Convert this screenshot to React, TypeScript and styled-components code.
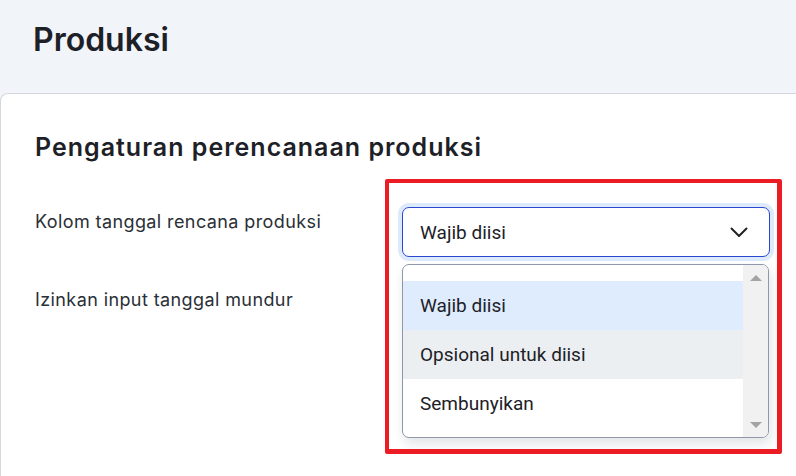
import styled, { createGlobalStyle } from 'styled-components';

const GlobalStyle = createGlobalStyle`
  html, body {
    margin: 0;
    padding: 0;
    background: #f1f4f9;
    overflow: hidden;
  }
  body {
    font-family: Inter, 'Noto Sans', sans-serif;
    color: #1d2127;
  }
`;

const Page = styled.div`
  width: 796px;
  height: 476px;
  display: flex;
  flex-direction: column;
`;

const Header = styled.header`
  height: 93px;
  padding: 20px 33px 0;
  box-sizing: border-box;
`;

const PageTitle = styled.h1`
  margin: 0;
  font-size: 32px;
  line-height: 40px;
  font-weight: 600;
  color: #1d2127;
`;

const Card = styled.section`
  flex: 1;
  width: 830px;
  background: #ffffff;
  border: 1px solid #d3d8e0;
  border-right: none;
  border-bottom: none;
  border-top-left-radius: 8px;
  padding: 35px 34px 0;
  box-sizing: border-box;
`;

const SectionTitle = styled.h2`
  margin: 0 0 42px;
  font-size: 25px;
  line-height: 36px;
  font-weight: 600;
  letter-spacing: 1px;
  color: #1d2127;
`;

const SettingsGrid = styled.div`
  display: grid;
  grid-template-columns: 367px 368px;
  row-gap: 28px;
`;

const Label = styled.div`
  font-size: 18px;
  line-height: 22px;
  letter-spacing: 0.4px;
  color: #2b2f36;
  padding-top: 4px;
`;

const Control = styled.div`
  position: relative;
  height: 50px;
`;

const SelectBox = styled.div<{ $open?: boolean }>`
  height: 50px;
  box-sizing: border-box;
  border: 1px solid ${(p) => (p.$open ? '#2a47cf' : '#c7ccd6')};
  border-radius: 7px;
  box-shadow: ${(p) => (p.$open ? '0 0 0 4px #dde9fc' : 'none')};
  display: flex;
  align-items: center;
  justify-content: space-between;
  padding: 0 21px 0 17px;
  font-family: Roboto, 'Liberation Sans', sans-serif;
  font-size: 19px;
  color: #1d2127;
  background: #fff;
`;

const Menu = styled.div`
  position: absolute;
  top: 57px;
  left: 0;
  width: 367px;
  height: 174px;
  box-sizing: border-box;
  border: 1px solid #8f97aa;
  border-radius: 7px;
  background: #fff;
  box-shadow: 2px 6px 12px rgba(20, 30, 50, 0.12);
  display: flex;
  overflow: hidden;
  z-index: 5;
`;

const OptionList = styled.ul`
  list-style: none;
  margin: 0;
  padding: 16px 0 0;
  flex: 1;
`;

const Option = styled.li<{ $state?: 'selected' | 'hover' }>`
  height: 49px;
  display: flex;
  align-items: center;
  padding-left: 17px;
  font-family: Roboto, 'Liberation Sans', sans-serif;
  font-size: 19px;
  color: #1d2127;
  background: ${(p) =>
    p.$state === 'selected' ? '#dfecfd' : p.$state === 'hover' ? '#eceff2' : '#fff'};
`;

const Scrollbar = styled.div`
  width: 25px;
  background: #f1f1f1;
  display: flex;
  flex-direction: column;
  justify-content: space-between;
  align-items: center;
  padding: 10px 0 9px;
`;

const Arrow = styled.span<{ $down?: boolean }>`
  width: 0;
  height: 0;
  border-left: 6px solid transparent;
  border-right: 6px solid transparent;
  ${(p) => (p.$down ? 'border-top: 6px solid #a3a3a3;' : 'border-bottom: 6px solid #a3a3a3;')}
`;

const Highlight = styled.div`
  position: absolute;
  left: -17px;
  top: -28px;
  width: 397px;
  height: 275px;
  box-sizing: border-box;
  border: 4px solid #ec1c24;
  border-right-width: 5px;
  border-bottom-width: 5px;
  border-radius: 2px;
  pointer-events: none;
  z-index: 6;
`;

const Chevron = () => (
  <svg width="18" height="11" viewBox="0 0 18 11" fill="none">
    <path d="M1.5 1.5 L9 9 L16.5 1.5" stroke="#222" strokeWidth="2" strokeLinecap="round" strokeLinejoin="round" />
  </svg>
);

const options = ['Wajib diisi', 'Opsional untuk diisi', 'Sembunyikan'];

export default function App() {
  return (
    <Page>
      <GlobalStyle />
      <Header>
        <PageTitle>Produksi</PageTitle>
      </Header>
      <Card>
        <SectionTitle>Pengaturan perencanaan produksi</SectionTitle>
        <SettingsGrid>
          <Label>Kolom tanggal rencana produksi</Label>
          <Control>
            <SelectBox $open>
              Wajib diisi
              <Chevron />
            </SelectBox>
            <Menu>
              <OptionList>
                {options.map((o, i) => (
                  <Option key={o} $state={i === 0 ? 'selected' : i === 1 ? 'hover' : undefined}>
                    {o}
                  </Option>
                ))}
              </OptionList>
              <Scrollbar>
                <Arrow />
                <Arrow $down />
              </Scrollbar>
            </Menu>
            <Highlight />
          </Control>
          <Label>Izinkan input tanggal mundur</Label>
          <Control />
        </SettingsGrid>
      </Card>
    </Page>
  );
}
